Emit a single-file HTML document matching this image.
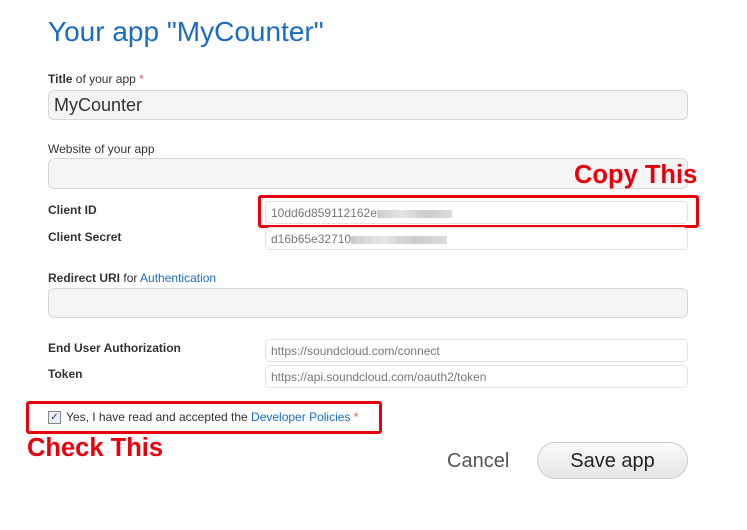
<!DOCTYPE html>
<html><head><style>
body{margin:0;width:747px;height:530px;background:#fff;position:relative;font-family:"Liberation Sans",sans-serif;overflow:hidden}
.a{position:absolute}
.lbl{font-size:12px;color:#333}
.b{font-weight:bold}
.in{position:absolute;background:#f5f5f5;border:1px solid #d8d8d8;border-radius:6px;box-sizing:border-box}
.sm{position:absolute;background:#fff;border:1px solid #e2e2e2;border-radius:5px;box-sizing:border-box;font-size:12px;color:#777;padding:4px 0 0 5px}
.red{position:absolute;border:3px solid #e8000d;border-radius:3px;box-sizing:border-box}
.rt{position:absolute;color:#e8000d;font-weight:bold;font-size:25.5px}
.blur{display:inline-block;width:140px;height:8px;background:linear-gradient(90deg,#ccc,#e4e4e4,#ccc,#ddd);vertical-align:middle}
</style></head><body>
<div class="a" style="left:48px;top:16px;font-size:28px;color:#1a6cc0">Your app "MyCounter"</div>
<div class="a lbl" style="left:48px;top:72px"><span class="b">Title</span> of your app <span style="color:#e55">*</span></div>
<div class="in" style="left:48px;top:90px;width:640px;height:30px;font-size:18px;color:#333;padding:4px 0 0 5px">MyCounter</div>
<div class="a lbl" style="left:48px;top:142px">Website of your app</div>
<div class="in" style="left:48px;top:158px;width:640px;height:31px"></div>
<div class="rt" style="left:574px;top:161px">Copy This</div>
<div class="a lbl b" style="left:48px;top:203px">Client ID</div>
<div class="sm" style="left:265px;top:201px;width:423px;height:23px">10dd6d859112162e<span class="blur" style="width:75px"></span></div>
<div class="red" style="left:258px;top:195px;width:441px;height:33px"></div>
<div class="a lbl b" style="left:48px;top:230px">Client Secret</div>
<div class="sm" style="left:265px;top:227px;width:423px;height:23px">d16b65e32710<span class="blur" style="width:96px"></span></div>
<div class="a lbl" style="left:48px;top:271px"><span class="b">Redirect URI</span> for <span style="color:#1a6cc0">Authentication</span></div>
<div class="in" style="left:48px;top:288px;width:640px;height:30px"></div>
<div class="a lbl b" style="left:48px;top:341px">End User Authorization</div>
<div class="sm" style="left:265px;top:339px;width:423px;height:23px">https://soundcloud.com/connect</div>
<div class="a lbl b" style="left:48px;top:367px">Token</div>
<div class="sm" style="left:265px;top:365px;width:423px;height:23px">https://api.soundcloud.com/oauth2/token</div>
<div class="red" style="left:26px;top:401px;width:356px;height:33px"></div>
<div class="a" style="left:48px;top:411px;width:11px;height:11px;border:1px solid #888;background:#e8eef6;font-size:10px;line-height:11px;text-align:center;color:#335">✓</div>
<div class="a lbl" style="left:66px;top:410px">Yes, I have read and accepted the <span style="color:#1a6cc0">Developer Policies</span> <span style="color:#e55">*</span></div>
<div class="rt" style="left:27px;top:434px">Check This</div>
<div class="a" style="left:447px;top:450px;font-size:20px;color:#555">Cancel</div>
<div class="a" style="left:537px;top:442px;width:151px;height:37px;box-sizing:border-box;border:1px solid #ccc;border-radius:19px;background:linear-gradient(#fafafa,#e6e6e6);font-size:20px;color:#222;text-align:center;line-height:36px">Save app</div>
</body></html>
